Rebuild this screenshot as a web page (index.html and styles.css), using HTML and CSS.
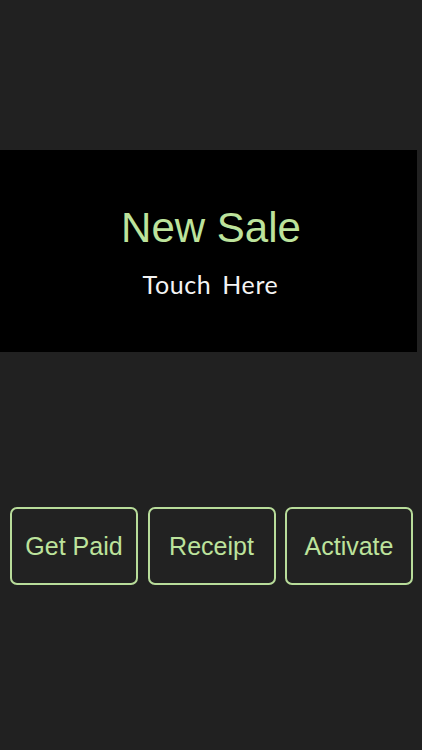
FILE: index.html
```html
<!DOCTYPE html>
<html>
<head>
<meta charset="utf-8">
<link rel="stylesheet" href="styles.css">
</head>
<body>
<div class="screen">
  <div class="sale">
    <div class="sale-title">New Sale</div>
    <div class="sale-sub">Touch Here</div>
  </div>
  <div class="actions">
    <div class="btn">Get Paid</div>
    <div class="btn">Receipt</div>
    <div class="btn">Activate</div>
  </div>
</div>
</body>
</html>
```
FILE: styles.css
```css
html, body {
  margin: 0;
  padding: 0;
  background: #212121;
}
.screen {
  width: 422px;
  height: 750px;
  display: flex;
  flex-direction: column;
  font-family: "Liberation Sans", Arial, sans-serif;
}
.sale {
  margin-top: 150px;
  width: 417px;
  height: 202px;
  background: #000;
  display: flex;
  flex-direction: column;
  align-items: center;
  box-sizing: border-box;
  padding-top: 54px;
}
.sale-title {
  color: #bde39c;
  font-size: 42px;
  line-height: 48px;
  margin-left: 5px;
}
.sale-sub {
  color: #f4f4f4;
  font-family: "Lato", sans-serif;
  font-weight: 400;
  font-size: 25px;
  line-height: 28px;
  letter-spacing: 0.6px;
  word-spacing: 4px;
  margin-top: 18px;
  margin-left: 4px;
}
.actions {
  margin-top: 155px;
  padding-left: 10px;
  display: flex;
  gap: 9.5px;
}
.btn {
  width: 128px;
  height: 78px;
  box-sizing: border-box;
  border: 2px solid #b8dc9a;
  border-radius: 7px;
  background: #222;
  color: #bde39c;
  font-size: 25px;
  display: flex;
  align-items: center;
  justify-content: center;
}
```
